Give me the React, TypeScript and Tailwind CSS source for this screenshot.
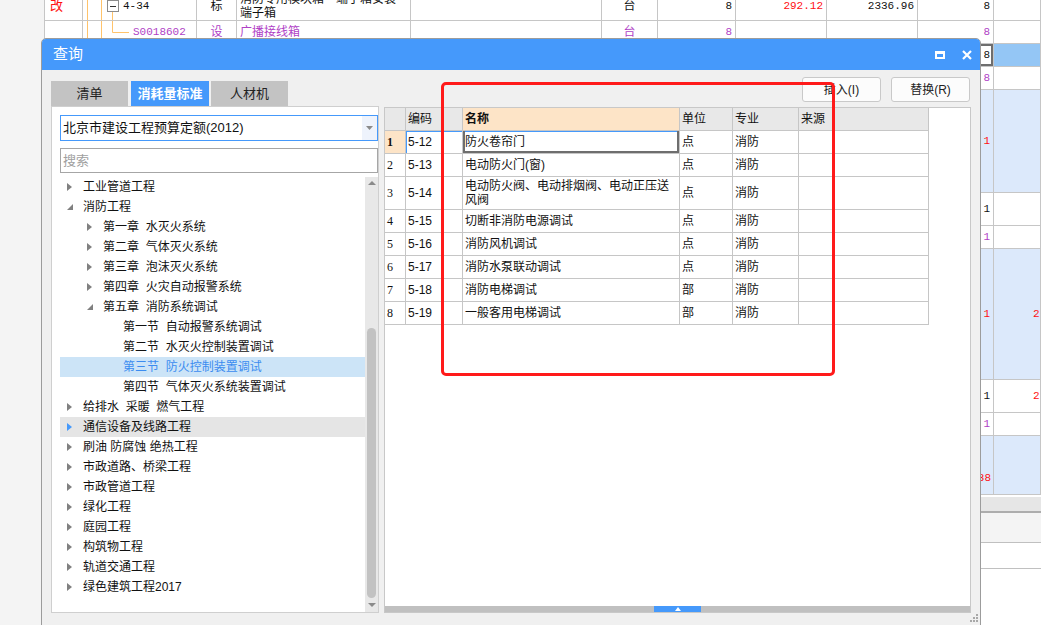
import type { ReactNode } from "react";

// background spreadsheet columns (the window sits on top of it)
const sheetCols = [
  "w-[38px]",
  "w-[114px]",
  "w-[40px]",
  "w-[174px]",
  "w-[191px]",
  "w-[56px]",
  "w-[78px]",
  "w-[91px]",
  "w-[91px]",
  "w-[76px]",
  "w-[47px]",
];

type Cells = Partial<Record<number, ReactNode>>;

const SheetRow = ({
  h,
  bg = "bg-white",
  cells,
  sel,
  className = "",
}: {
  h: string;
  bg?: string;
  cells: Cells;
  sel?: number;
  className?: string;
}) => (
  <div className={`flex shrink-0 ${h} ${bg} ${className}`}>
    {sheetCols.map((w, i) => (
      <div
        key={i}
        className={`${w} shrink-0 relative flex items-center overflow-hidden border-r border-b border-[#c6c6c6] ${
          sel === i ? "bg-white shadow-[inset_0_0_0_2px_#6e6e6e]" : ""
        }`}
      >
        {cells[i]}
      </div>
    ))}
  </div>
);

const Num = ({ children, c = "text-[#111]" }: { children: ReactNode; c?: string }) => (
  <span className={`ml-auto pr-[3px] leading-[12px] [font-family:'Liberation_Mono',monospace] text-[11px] ${c}`}>
    {children}
  </span>
);

const PURPLE = "text-[#b03fc6]";
const RED = "text-[#ff1010]";

const Sheet = () => (
  <div className="flex-1 flex flex-col bg-white border-l border-[#c6c6c6] text-[12px] text-[#111]">
    {/* first row is scrolled partly out of view */}
    <SheetRow
      h="h-[30px]"
      className="-mt-[9px]"
      cells={{
        0: <span className="pl-[5px] leading-[12px] text-[#ff1010] text-[13px]">改</span>,
        1: (
          <>
            <svg className="absolute inset-0" width="114" height="30">
              <path d="M4.5 0V30M18.5 0V30M29.5 20V30" stroke="#ffc36b" />
              <rect x="24.5" y="9.5" width="11" height="11" fill="#fff" stroke="#8c8c8c" />
              <path d="M27 15.5H33" stroke="#333" />
            </svg>
            <span className="relative pl-[40px] leading-[12px] [font-family:'Liberation_Mono',monospace] text-[11px]">
              4-34
            </span>
          </>
        ),
        2: <span className="mx-auto leading-[12px]">标</span>,
        3: (
          <div className="pl-[3px] leading-[14px] whitespace-nowrap">
            <div>消防专用模块箱・端子箱安装</div>
            <div>端子箱</div>
          </div>
        ),
        5: <span className="mx-auto leading-[12px]">台</span>,
        6: <Num>8</Num>,
        7: <Num c={RED}>292.12</Num>,
        8: <Num>2336.96</Num>,
        9: <Num>8</Num>,
      }}
    />
    <SheetRow
      h="h-[23px]"
      cells={{
        1: (
          <>
            <svg className="absolute inset-0" width="114" height="23">
              <path d="M4.5 0V23M18.5 0V23M29.5 0V11.5H46" stroke="#ffc36b" fill="none" />
            </svg>
            <span className={`relative pl-[50px] [font-family:'Liberation_Mono',monospace] text-[11px] ${PURPLE}`}>
              S0018602
            </span>
          </>
        ),
        2: <span className={`mx-auto ${PURPLE}`}>设</span>,
        3: <span className={`pl-[3px] ${PURPLE}`}>广播接线箱</span>,
        5: <span className={`mx-auto ${PURPLE}`}>台</span>,
        6: <Num c={PURPLE}>8</Num>,
        9: <Num c={PURPLE}>8</Num>,
      }}
    />
    <SheetRow h="h-[23px]" bg="bg-[#94c6f5]" sel={9} cells={{ 9: <Num>8</Num> }} />
    <SheetRow h="h-[23px]" cells={{ 9: <Num c={PURPLE}>8</Num> }} />
    <SheetRow h="h-[103px]" bg="bg-[#dce9fb]" cells={{ 9: <Num c={RED}>1</Num> }} />
    <SheetRow h="h-[33px]" cells={{ 9: <Num>1</Num> }} />
    <SheetRow h="h-[23px]" cells={{ 9: <Num c={PURPLE}>1</Num> }} />
    <SheetRow
      h="h-[131px]"
      bg="bg-[#dce9fb]"
      cells={{
        9: <Num c={RED}>1</Num>,
        10: <span className={`pl-[39px] [font-family:'Liberation_Mono',monospace] text-[11px] ${RED}`}>2</span>,
      }}
    />
    <SheetRow
      h="h-[33px]"
      cells={{
        9: <Num>1</Num>,
        10: <span className={`pl-[39px] [font-family:'Liberation_Mono',monospace] text-[11px] ${RED}`}>2</span>,
      }}
    />
    <SheetRow h="h-[23px]" cells={{ 9: <Num c={PURPLE}>1</Num> }} />
    <SheetRow
      h="h-[59px]"
      bg="bg-[#dce9fb]"
      cells={{
        9: (
          <span className={`ml-auto self-end mb-[8px] pr-[2px] [font-family:'Liberation_Mono',monospace] text-[11px] ${RED}`}>
            1.38
          </span>
        ),
      }}
    />
    {/* lower pane */}
    <div className="h-[2px] shrink-0 bg-white" />
    <div className="h-[16px] shrink-0 bg-[#e6e6e6] border-b-2 border-[#adadad]" />
    <div className="h-[30px] shrink-0 bg-[#f4f4f4] border-b border-[#c0c0c0]" />
    <div className="h-[26px] shrink-0 bg-white border-b border-[#c0c0c0]" />
    <div className="flex-1 bg-white" />
  </div>
);

type Node = { l: 0 | 1 | 2; t: string; s?: "closed" | "open"; sel?: boolean; hover?: boolean };

const tree: Node[] = [
  { l: 0, t: "工业管道工程", s: "closed" },
  { l: 0, t: "消防工程", s: "open" },
  { l: 1, t: "第一章  水灭火系统", s: "closed" },
  { l: 1, t: "第二章  气体灭火系统", s: "closed" },
  { l: 1, t: "第三章  泡沫灭火系统", s: "closed" },
  { l: 1, t: "第四章  火灾自动报警系统", s: "closed" },
  { l: 1, t: "第五章  消防系统调试", s: "open" },
  { l: 2, t: "第一节  自动报警系统调试" },
  { l: 2, t: "第二节  水灭火控制装置调试" },
  { l: 2, t: "第三节  防火控制装置调试", sel: true },
  { l: 2, t: "第四节  气体灭火系统装置调试" },
  { l: 0, t: "给排水  采暖  燃气工程", s: "closed" },
  { l: 0, t: "通信设备及线路工程", s: "closed", hover: true },
  { l: 0, t: "刷油 防腐蚀 绝热工程", s: "closed" },
  { l: 0, t: "市政道路、桥梁工程", s: "closed" },
  { l: 0, t: "市政管道工程", s: "closed" },
  { l: 0, t: "绿化工程", s: "closed" },
  { l: 0, t: "庭园工程", s: "closed" },
  { l: 0, t: "构筑物工程", s: "closed" },
  { l: 0, t: "轨道交通工程", s: "closed" },
  { l: 0, t: "绿色建筑工程2017", s: "closed" },
];

const indent = ["pl-[7px]", "pl-[27px]", "pl-[47px]"];

const TreeRow = ({ n }: { n: Node }) => (
  <div
    className={`h-[20px] flex items-center ${indent[n.l]} ${
      n.sel ? "bg-[#cce4f7] text-[#3b8cf0]" : n.hover ? "bg-[#e5e5e5]" : ""
    }`}
  >
    <span className="w-[16px] shrink-0 flex items-center">
      {n.s === "closed" && (
        <svg width="5" height="8">
          <path d="M0 0L5 4L0 8Z" fill={n.hover ? "#4599fb" : "#808080"} />
        </svg>
      )}
      {n.s === "open" && (
        <svg width="6" height="6">
          <path d="M6 0V6H0Z" fill="#808080" />
        </svg>
      )}
    </span>
    <span className="whitespace-pre leading-[20px]">{n.t}</span>
  </div>
);

const tableCols = ["w-[21px]", "w-[37px]", "w-[20px]", "w-[217px]", "w-[53px]", "w-[66px]", "w-[130px]"];

const rows = [
  ["1", "5-12", "防火卷帘门", "点", "消防"],
  ["2", "5-13", "电动防火门(窗)", "点", "消防"],
  ["3", "5-14", "电动防火阀、电动排烟阀、电动正压送风阀", "点", "消防"],
  ["4", "5-15", "切断非消防电源调试", "点", "消防"],
  ["5", "5-16", "消防风机调试", "点", "消防"],
  ["6", "5-17", "消防水泵联动调试", "点", "消防"],
  ["7", "5-18", "消防电梯调试", "部", "消防"],
  ["8", "5-19", "一般客用电梯调试", "部", "消防"],
];

const cell = "shrink-0 flex items-center border-r border-b border-[#c6c6c6] pl-[2px]";

const QueryTable = () => (
  <div className="w-[544px] text-[12px] text-[#111]">
    <div className="flex h-[23px]">
      <div className={`${tableCols[0]} ${cell} bg-[#e8e8e8]`} />
      <div className={`${tableCols[1]} ${cell} bg-[#e8e8e8]`}>编码</div>
      <div className={`${tableCols[2]} ${cell} bg-[#e8e8e8]`} />
      <div className={`${tableCols[3]} ${cell} bg-[#fde4c7] font-bold`}>名称</div>
      <div className={`${tableCols[4]} ${cell} bg-[#e8e8e8]`}>单位</div>
      <div className={`${tableCols[5]} ${cell} bg-[#e8e8e8]`}>专业</div>
      <div className={`${tableCols[6]} ${cell} bg-[#e8e8e8]`}>来源</div>
    </div>
    {rows.map((r, i) => (
      <div key={r[0]} className={`flex ${i === 2 ? "h-[33px]" : "h-[23px]"}`}>
        <div
          className={`${tableCols[0]} ${cell} [font-family:'Liberation_Serif',serif] ${
            i === 0 ? "bg-[#fde4c7] font-bold" : ""
          }`}
        >
          {r[0]}
        </div>
        <div className={`${tableCols[1]} ${cell} ${i === 0 ? "shadow-[inset_1px_1px_0_#4599fb]" : ""}`}>{r[1]}</div>
        <div className={`${tableCols[2]} ${cell} ${i === 0 ? "shadow-[inset_0_1px_0_#4599fb]" : ""}`} />
        <div
          className={`${tableCols[3]} ${cell} leading-[14px] ${
            i === 0 ? "shadow-[inset_2px_0_0_#6e6e6e,inset_-2px_-2px_0_#6e6e6e,inset_0_1px_0_#4599fb]" : ""
          }`}
        >
          <span className="pr-[6px]">{r[2]}</span>
        </div>
        <div className={`${tableCols[4]} ${cell}`}>{r[3]}</div>
        <div className={`${tableCols[5]} ${cell}`}>{r[4]}</div>
        <div className={`${tableCols[6]} ${cell}`} />
      </div>
    ))}
  </div>
);

const QueryDialog = () => (
  <div className="absolute left-[41px] top-[38px] w-[940px] h-[592px] flex flex-col bg-[#f0f0f0] border border-[#9c9c9c] rounded-t-[5px] overflow-hidden">
    {/* title bar */}
    <div className="h-[31px] shrink-0 bg-[#4599fb] flex items-center pl-[11px] pr-[8px] text-white text-[15px]">
      <span>查询</span>
      <div className="ml-auto flex items-center gap-[17px]">
        <svg width="10" height="8" viewBox="0 0 10 8">
          <path d="M0 0H10V8H0ZM2 3V6H8V3Z" fill="#fff" fillRule="evenodd" />
        </svg>
        <svg width="10" height="10" viewBox="0 0 10 10">
          <path d="M1 1L9 9M9 1L1 9" stroke="#fff" strokeWidth="2.2" />
        </svg>
      </div>
    </div>

    {/* body */}
    <div className="flex-1 flex pl-[9px] relative">
      {/* left: tabs + tree */}
      <div className="w-[328px] flex flex-col">
        <div className="mt-[11px] h-[25px] flex text-[13px] text-[#222]">
          <div className="w-[77px] bg-[#c3c3c3] flex items-center justify-center">清单</div>
          <div className="ml-[3px] w-[78px] bg-[#4599fb] text-white font-bold flex items-center justify-center">
            消耗量标准
          </div>
          <div className="ml-[2px] w-[77px] bg-[#c3c3c3] flex items-center justify-center">人材机</div>
        </div>
        <div className="h-[507px] bg-white border border-[#cfcfcf] flex flex-col pl-[8px] text-[12px] text-[#111]">
          <div className="mt-[8px] h-[26px] border border-[#4599fb] flex items-center">
            <span className="pl-[2px] flex-1 text-[13px]">北京市建设工程预算定额(2012)</span>
            <span className="w-[15px] h-full bg-[#eef3fc] flex items-center justify-center">
              <svg width="7" height="4">
                <path d="M0 0H7L3.5 4Z" fill="#8a8a8a" />
              </svg>
            </span>
          </div>
          <div className="mt-[7px] h-[25px] border border-[#a6a6a6] flex items-center pl-[2px] text-[13px] text-[#a0a0a0]">
            搜索
          </div>
          <div className="mt-[4px] flex-1 flex min-h-0">
            <div className="flex-1">
              {tree.map((n) => (
                <TreeRow key={n.t} n={n} />
              ))}
            </div>
            <div className="w-[13px] bg-[#e8e8e8] flex flex-col items-center">
              <svg className="mt-[4px]" width="8" height="4">
                <path d="M0 4H8L4 0Z" fill="#8a8a8a" />
              </svg>
              <div className="mt-[143px] w-[9px] h-[270px] rounded-full bg-[#c2c2c2]" />
              <svg className="mt-auto mb-[5px]" width="8" height="4">
                <path d="M0 0H8L4 4Z" fill="#8a8a8a" />
              </svg>
            </div>
          </div>
        </div>
      </div>

      {/* right: buttons + table */}
      <div className="ml-[5px] w-[587px] flex flex-col">
        <div className="mt-[7px] h-[25px] flex justify-end gap-[10px] pr-[1px] text-[12px] text-[#222]">
          <button className="w-[79px] h-[25px] border border-[#c9c9c9] rounded-[3px] bg-[#fcfcfc]">插入(I)</button>
          <button className="w-[79px] h-[25px] border border-[#c9c9c9] rounded-[3px] bg-[#fcfcfc]">替换(R)</button>
        </div>
        <div className="mt-[5px] h-[506px] bg-white border border-[#c8c8c8] flex flex-col">
          <QueryTable />
          <div className="flex-1" />
          <div className="h-[6px] bg-[#c0c0c0] flex justify-center">
            <div className="w-[47px] h-full bg-[#4599fb] flex items-center justify-center">
              <svg width="6" height="4">
                <path d="M0 4H6L3 0Z" fill="#fff" />
              </svg>
            </div>
          </div>
        </div>
      </div>

      {/* resize grip */}
      <svg className="absolute right-[2px] top-[544px]" width="8" height="8">
        <rect x="6" y="0" width="2" height="2" fill="#a8a8a8" />
        <rect x="3" y="3" width="2" height="2" fill="#a8a8a8" />
        <rect x="6" y="3" width="2" height="2" fill="#a8a8a8" />
        <rect x="0" y="6" width="2" height="2" fill="#a8a8a8" />
        <rect x="3" y="6" width="2" height="2" fill="#a8a8a8" />
        <rect x="6" y="6" width="2" height="2" fill="#a8a8a8" />
      </svg>
    </div>
  </div>
);

const App = () => (
  <div className="relative w-[1041px] h-[625px] overflow-hidden bg-[#f4f4f4] [font-family:'Liberation_Sans','Noto_Sans_CJK_SC',sans-serif]">
    <div className="flex h-full">
      <div className="w-[44px] shrink-0 bg-[#f4f4f4]" />
      <Sheet />
    </div>
    <QueryDialog />
    {/* red annotation box */}
    <div className="absolute left-[441px] top-[82px] w-[394px] h-[294px] border-[3px] border-[#ff1a1a] rounded-[5px]" />
  </div>
);

export default App;
